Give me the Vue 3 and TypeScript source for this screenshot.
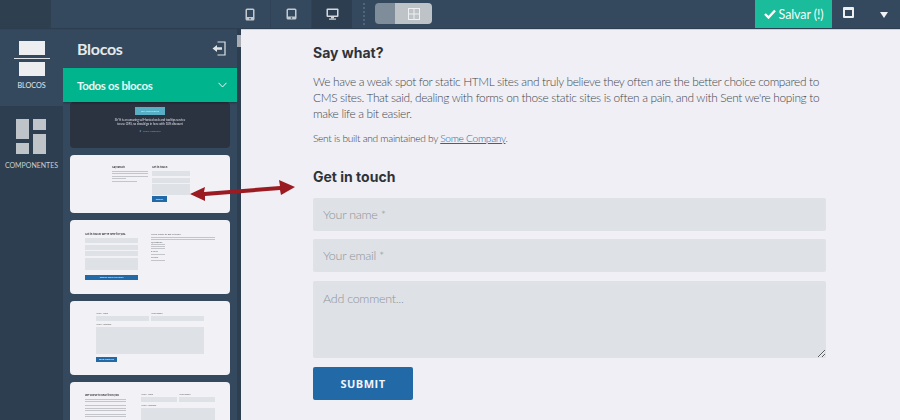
<script setup lang="ts">
const bars = [0, 1]
</script>

<template>
  <div class="app">
    <header class="topbar">
      <div class="corner"></div>
      <div class="devices">
        <button class="dev">
          <svg width="10" height="13" viewBox="0 0 10 13"><rect x="0.5" y="0.5" width="9" height="12" rx="1.5" fill="#c3c9ce"/><rect x="2" y="2" width="6" height="7" fill="#34495e"/><circle cx="5" cy="10.8" r="0.8" fill="#34495e"/></svg>
        </button>
        <button class="dev">
          <svg width="11" height="12" viewBox="0 0 11 12"><rect x="0.5" y="0.5" width="10" height="11" rx="1.5" fill="#c3c9ce"/><rect x="2" y="2" width="7" height="6.5" fill="#34495e"/><circle cx="5.5" cy="10" r="0.8" fill="#34495e"/></svg>
        </button>
        <button class="dev active">
          <svg width="13" height="12" viewBox="0 0 13 12"><rect x="0.5" y="0.5" width="12" height="8.5" rx="1" fill="#d5d9dc"/><rect x="2" y="2" width="9" height="5.5" fill="#2c3e50"/><rect x="5" y="9" width="3" height="1.5" fill="#d5d9dc"/><rect x="3" y="10.5" width="7" height="1.2" fill="#d5d9dc"/></svg>
        </button>
        <div class="dots"></div>
        <div class="toggle">
          <span class="t-off"></span>
          <span class="t-on">
            <svg width="12" height="12" viewBox="0 0 12 12"><rect x="0.5" y="0.5" width="11" height="11" fill="none" stroke="#eef0f2" stroke-width="1"/><path d="M6 0v12M0 6h12" stroke="#eef0f2" stroke-width="1"/></svg>
          </span>
        </div>
      </div>
      <div class="actions">
        <button class="save">
          <svg width="12" height="10" viewBox="0 0 12 10"><path d="M1 5l3.5 3.5L11 1.5" fill="none" stroke="#fff" stroke-width="2.4"/></svg>
          <span>Salvar (!)</span>
        </button>
        <div class="win"></div>
        <div class="caret"></div>
      </div>
    </header>

    <div class="main">
      <nav class="rail">
        <div class="rail-item on">
          <svg width="36" height="36" viewBox="0 0 36 36">
            <rect x="5" y="0" width="26" height="14" fill="#eceef0"/>
            <rect x="0" y="17" width="36" height="1" fill="#dfe3e6"/>
            <rect x="5" y="21" width="26" height="14" fill="#eceef0"/>
          </svg>
          <span>BLOCOS</span>
        </div>
        <div class="rail-item">
          <svg width="31" height="35" viewBox="0 0 31 35">
            <rect x="0" y="0" width="13" height="20" fill="#bfc4c8"/>
            <rect x="17" y="0" width="13" height="11" fill="#bfc4c8"/>
            <rect x="0" y="24" width="13" height="11" fill="#bfc4c8"/>
            <rect x="17" y="15" width="13" height="20" fill="#bfc4c8"/>
          </svg>
          <span>COMPONENTES</span>
        </div>
      </nav>

      <aside class="panel">
        <div class="panel-head">
          <h2>Blocos</h2>
          <svg width="14" height="15" viewBox="0 0 14 15"><path d="M5.5 1H13v13H5.5" fill="none" stroke="#dfe3e6" stroke-width="1.2"/><path d="M0.5 7.5L5 4v2.3h5v2.4H5V11z" fill="#dfe3e6"/></svg>
        </div>
        <div class="cat">
          <span>Todos os blocos</span>
          <svg width="9" height="6" viewBox="0 0 9 6"><path d="M0.5 0.8L4.5 5l4-4.2" fill="none" stroke="#e8f7f3" stroke-width="1"/></svg>
        </div>
        <div class="thumbs">
          <div class="thumb dark">
            <span class="mini-cta">BUY NOW ONLINE</span>
            <p class="d-text">Sh*ft is an amazing self-hosted web and tooltips service<br>to use CMS, so should go in here with 10% discount</p>
            <p class="d-link">★ Some Company</p>
          </div>

          <div class="thumb t2">
            <div class="t2-l">
              <b>Say what?</b>
              <i class="l"></i><i class="l"></i><i class="l"></i><i class="l short"></i>
              <i class="l mid"></i>
            </div>
            <div class="t2-r">
              <b>Get in touch</b>
              <i class="f"></i><i class="f"></i><i class="f tall"></i>
              <span class="mini-btn">SUBMIT</span>
            </div>
          </div>

          <div class="thumb t3">
            <div class="t3-l">
              <b>Got in touch! We're here for you.</b>
              <i class="f"></i><i class="f"></i><i class="f"></i><i class="f tall"></i>
              <span class="mini-btn wide">SUBMIT CONTACT FORM</span>
            </div>
            <div class="t3-r">
              <small>We're eager to get in touch</small>
              <i class="l"></i><i class="l"></i>
              <small>Questions</small>
              <i class="l s1"></i><i class="l s1"></i><i class="l s1"></i>
              <small>E-mail</small>
              <i class="l s1"></i>
              <small>Follow</small>
              <i class="l s1"></i>
            </div>
          </div>

          <div class="thumb t4">
            <div class="t4-in">
              <div class="two">
                <div><small>Your Name</small><i class="f"></i></div>
                <div><small>Your Email</small><i class="f"></i></div>
              </div>
              <small>Your Message</small>
              <i class="f big"></i>
              <span class="mini-btn mid-btn">SEND MESSAGE</span>
            </div>
          </div>

          <div class="thumb t5">
            <div class="t5-l">
              <b>We'd love to hear from you</b>
              <i class="l"></i><i class="l"></i>
              <i class="l gap"></i><i class="l"></i><i class="l"></i>
              <i class="l gap"></i><i class="l"></i>
            </div>
            <div class="t5-r">
              <div class="two">
                <div><small>Your Name</small><i class="f"></i></div>
                <div><small>Your Email</small><i class="f"></i></div>
              </div>
              <small>Your Message</small>
              <i class="f big"></i>
            </div>
          </div>
        </div>
      </aside>

      <div class="scroll"><span></span></div>

      <main class="content">
        <h3>Say what?</h3>
        <p class="lead">We have a weak spot for static HTML sites and truly believe they often are the better choice compared to CMS sites. That said, dealing with forms on those static sites is often a pain, and with Sent we're hoping to make life a bit easier.</p>
        <p class="note">Sent is built and maintained by <a>Some Company</a>.</p>
        <h3 class="touch">Get in touch</h3>
        <form class="form" @submit.prevent>
          <input placeholder="Your name *" />
          <input placeholder="Your email *" />
          <textarea placeholder="Add comment..."></textarea>
          <button type="submit">SUBMIT</button>
        </form>
      </main>
    </div>

    <svg class="arrow" width="110" height="24" viewBox="0 0 110 24">
      <path d="M1 15L16 8 15 13 91 7 90 1 106 8 92 16 91 11 16 17 16 22z" fill="#9b1b22"/>
    </svg>
  </div>
</template>

<style>
html, body { margin: 0; background: #efeff5; }
</style>

<style scoped>
.app { position: relative; width: 900px; height: 420px; overflow: hidden; display: flex; flex-direction: column; font-family: Lato, sans-serif; background: #efeff5; }
.topbar { height: 28px; flex: none; display: flex; background: #34495e; box-shadow: 0 1px 1px #2c3e50; z-index: 2; }
.corner { width: 51px; background: #2e3f50; }
.devices { display: flex; align-items: stretch; margin-left: 178px; flex: 1; }
.dev { width: 41px; border: 0; padding: 0; background: transparent; display: flex; align-items: center; justify-content: center; }
.dev + .dev { border-left: 1px solid #2f4257; }
.dev.active { background: #2c3e50; }
.dots { width: 0; margin: 3px 0 3px 11px; border-left: 2px dotted #52647a; }
.toggle { display: flex; margin: 3px 0 4px 10px; height: 21px; width: 57px; border-radius: 4px; overflow: hidden; }
.t-off { width: 20px; background: #7f8c9a; }
.t-on { flex: 1; background: #bdc3c7; display: flex; align-items: center; justify-content: center; }
.actions { display: flex; align-items: stretch; }
.save { width: 77px; border: 0; padding: 0; background: #1abc9c; color: #f4fbf9; font: 400 12.5px Lato, sans-serif; letter-spacing: -.1px; display: flex; align-items: center; justify-content: center; gap: 3px; }
.win { width: 7px; height: 6px; margin: 7px 0 0 11px; border: 2px solid #eef0f2; border-top-width: 3px; border-radius: 1px; }
.caret { width: 0; height: 0; margin: 12px 12.5px 0 25.5px; border-left: 4.5px solid transparent; border-right: 4.5px solid transparent; border-top: 6px solid #f2f3f5; }

.main { flex: 1; min-height: 0; display: flex; }
.rail { width: 63px; flex: none; background: #2c3e50; display: flex; flex-direction: column; }
.rail-item { height: 78px; display: flex; flex-direction: column; align-items: center; padding-top: 13px; box-sizing: border-box; color: #c9ced3; font-size: 7.2px; gap: 4px; }
.rail-item.on { background: #34495e; color: #e6e9eb; }
.rail-item + .rail-item { padding-top: 13px; gap: 7px; font-size: 7px; }

.panel { width: 174px; flex: none; background: #34495e; display: flex; flex-direction: column; overflow: hidden; }
.panel-head { height: 40px; flex: none; display: flex; align-items: center; justify-content: space-between; padding: 0 11px 0 14px; box-sizing: border-box; color: #e6e9eb; }
.panel-head h2 { margin: 0; font: 700 16px Lato, sans-serif; letter-spacing: -.3px; }
.cat { height: 34px; flex: none; background: #00b48e; color: #e8f7f3; display: flex; align-items: center; justify-content: space-between; padding: 0 10px 0 14px; font-size: 11.5px; letter-spacing: -.35px; font-weight: 700; position: relative; z-index: 1; box-shadow: 0 1px 2px rgba(0,0,0,.3); }
.thumbs { display: flex; flex-direction: column; gap: 7px; padding: 0 7px; }
.thumb { width: 160px; flex: none; box-sizing: border-box; background: #f1f1f6; border-radius: 4px; color: #444; }
.thumb > * { filter: blur(.3px); }
.thumb b { display: block; font: 700 2.6px Inter, sans-serif; color: #333; margin-bottom: 2px; }
.thumb small { display: block; font-size: 2.5px; color: #666; margin-bottom: 1px; }
.thumb i { display: block; }
.l { height: 1px; background: #c4c5cb; margin-bottom: 1.3px; }
.l.short { width: 40%; }
.l.mid { width: 70%; margin-top: 2px; }
.l.s1 { width: 22%; }
.l.gap { margin-top: 3px; }
.f { height: 5px; background: #dee1e6; margin-bottom: 2px; }
.f.tall { height: 13px; }
.f.big { height: 27px; }
.mini-btn { display: block; width: 15px; height: 6px; background: #2269a8; color: #e8f0f7; font: 700 2px/6px Lato, sans-serif; text-align: center; margin-top: 1px; }
.mini-btn.wide { width: 53px; height: 5px; line-height: 5px; margin-top: 5px; }
.mini-btn.mid-btn { width: 21px; height: 5px; line-height: 5px; margin-top: 3px; }

.dark { height: 46px; background: #2b3240; display: flex; flex-direction: column; align-items: center; padding-top: 5px; }
.mini-cta { width: 30px; height: 8px; background: #58aec4; color: #d9f0f5; font: 700 2px/8px Lato, sans-serif; text-align: center; }
.d-text { margin: 3px 0 0; font-size: 2.9px; line-height: 4px; text-align: center; color: #dfe3ea; }
.d-link { margin: 3px 0 0; font-size: 2.6px; color: #5aa3c7; }

.t2 { height: 58px; padding: 10px 40px 0 42px; display: flex; gap: 2px; }
.t2-l { width: 36px; margin-right: 2px; }
.t2-r { flex: 1; }
.t2 .f { margin-bottom: 1.5px; height: 5px; }
.t2 .f.tall { height: 11px; margin-bottom: 1px; }
.t3 { height: 74px; padding: 12px 15px 0 15px; display: flex; gap: 13px; }
.t3-l { width: 53px; }
.t3-l .f { height: 5px; margin-bottom: 1.5px; }
.t3-l .f.tall { height: 12px; }
.t3-r { flex: 1; }
.t3-r small { margin-bottom: .8px; margin-top: 1px; }
.t3-r .l { margin-bottom: .8px; }
.t4 { height: 74px; padding: 11px 26px 0; }
.two { display: flex; gap: 2px; }
.two > div { flex: 1; }
.t5 { height: 74px; padding: 11px 15px 0; display: flex; gap: 15px; }
.t5-l { width: 41px; }
.t5-r { flex: 1; }

.scroll { width: 4px; flex: none; background: #2c3e50; }
.scroll span { display: block; margin-top: 7px; height: 12px; background: #a7adb3; }

.content { flex: 1; background: #efeff5; padding: 16px 74px 0 72px; box-sizing: border-box; }
.content h3 { margin: 0; font: 700 14px/18px Inter, sans-serif; color: #2f3338; }
.lead { margin: 12px 0 0; font: 300 11.9px/16px Lato, sans-serif; letter-spacing: -.33px; color: #44484f; }
.note { margin: 8px 0 0; font: 300 10.2px/16px Lato, sans-serif; letter-spacing: -.3px; color: #3a3e44; }
.note a { color: #2269a8; text-decoration: underline; }
.content h3.touch { margin-top: 22px; }
.form { display: flex; flex-direction: column; align-items: flex-start; margin-top: 12px; }
.form input, .form textarea { width: 513px; box-sizing: border-box; border: 0; border-radius: 2px; background: #dee1e6; padding: 0 10px; font: 300 12.5px Lato, sans-serif; letter-spacing: -.27px; color: #444; outline: none; display: block; }
.form input { height: 33px; margin-bottom: 8px; }
.form textarea { height: 77px; padding-top: 10px; margin-top: 1px; }
.form input::placeholder, .form textarea::placeholder { color: #8f949b; opacity: 1; }
.form button { margin-top: 9px; width: 100px; height: 33px; border: 0; border-radius: 2px; background: #2269a8; color: #f1f4f8; font: 700 11px "Open Sans", sans-serif; letter-spacing: .5px; }

.arrow { position: absolute; left: 189px; top: 179px; z-index: 3; }
</style>
